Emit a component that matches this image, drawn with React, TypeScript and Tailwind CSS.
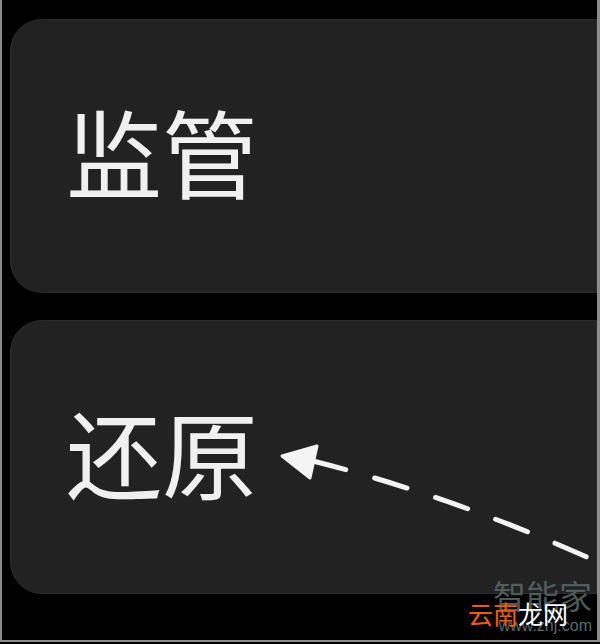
import React from 'react';

const cjk = { fontFamily: '"Noto Sans CJK SC", "Noto Sans", sans-serif' };

const Card: React.FC<{ label: string }> = ({ label }) => (
  <div className="h-[274px] w-full bg-[#222222] border border-[#2b2d2f] rounded-l-[32px] flex items-center pl-[55px] pb-[13px]">
    <span className="text-[96px] leading-none text-[#f0f0f0] font-normal" style={cjk}>
      {label}
    </span>
  </div>
);

const App: React.FC = () => {
  return (
    <div className="relative w-[600px] h-[644px] bg-black overflow-hidden">
      {/* frame */}
      <div className="w-full h-[642px] border-l-2 border-r-[3px] border-b-2 border-[#8c8c8c] pl-[8px] pt-[19px] flex flex-col gap-[27px]">
        <Card label="监管" />
        <Card label="还原" />
      </div>

      {/* dashed arrow */}
      <svg className="absolute inset-0 pointer-events-none" width="600" height="644" viewBox="0 0 600 644">
        <path
          d="M313 461 Q 455 497 600 563"
          fill="none"
          stroke="#f4f4f4"
          strokeWidth="5"
          strokeLinecap="round"
          strokeDasharray="34 30"
        />
        <polygon points="282,456 317,446 310,478" fill="#f4f4f4" stroke="#f4f4f4" strokeWidth="3" strokeLinejoin="round" />
      </svg>

      {/* watermark */}
      <div className="absolute right-[8px] bottom-[10px] grid justify-items-end" style={cjk}>
        <span className="col-start-1 row-start-1 self-start text-[33px] leading-none text-[#566464] opacity-90 -translate-y-[22px]">
          智能家
        </span>
        <span
          className="col-start-1 row-start-1 self-end text-[16px] leading-none text-[#5b6868]"
          style={{ fontFamily: '"Liberation Sans", sans-serif' }}
        >
          www.znj.com
        </span>
        <span className="col-start-1 row-start-1 justify-self-start -translate-x-[24px] text-[25px] leading-none">
          <span className="text-[#f25c0c]">云南</span>
          <span className="text-white">龙网</span>
        </span>
      </div>
    </div>
  );
};

export default App;
